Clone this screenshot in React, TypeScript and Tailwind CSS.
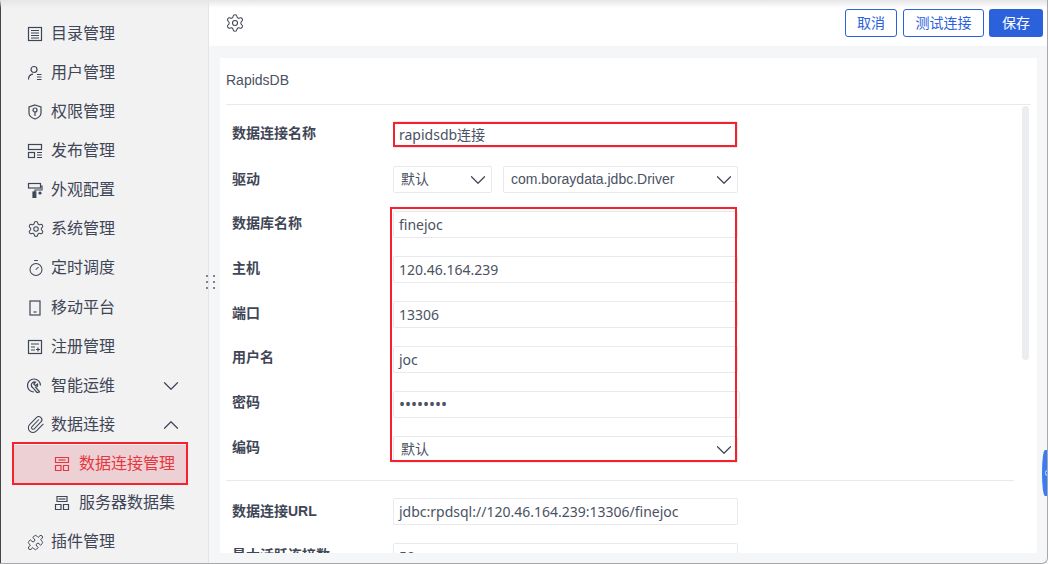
import type { ReactNode } from "react";
import { ChevronDown, ChevronUp, Paperclip, Puzzle, Settings, Timer } from "lucide-react";

function Ic({ children }: { children: ReactNode }) {
  return (
    <svg width="16" height="16" viewBox="0 0 16 16" fill="none" stroke="currentColor" strokeWidth="1.2">
      {children}
    </svg>
  );
}

const CatalogIcon = () => (
  <Ic>
    <rect x="1.500" y="1.500" width="13" height="13" />
    <path d="M4 4.500h8M4 7h8M4 9.500h8M4 12h8" />
  </Ic>
);
const UserIcon = () => (
  <Ic>
    <circle cx="7" cy="4.500" r="3" />
    <path d="M1.500 14.500c0-3 2-5 4.500-5.300M10 9.500h4.500M10 12h4.500M10 14.500h4.500" />
  </Ic>
);
const ShieldIcon = () => (
  <Ic>
    <path d="M8 1l6 2v6c0 3-3 5-6 6-3-1-6-3-6-6V3z" />
    <circle cx="8" cy="6" r="2" />
    <path d="M8 8v4" />
  </Ic>
);
const PublishIcon = () => (
  <Ic>
    <rect x="1.500" y="1.500" width="13" height="5" />
    <rect x="1.500" y="9.500" width="6" height="5" />
    <path d="M10 9.500h5M10 12h5M10 14.500h5" />
  </Ic>
);
const RollerIcon = () => (
  <Ic>
    <rect x="1.500" y="1.500" width="12" height="4.500" />
    <path d="M13.500 4h1.500v4h-7v2" />
    <rect x="6" y="10" width="2.800" height="5.500" fill="currentColor" />
    <circle cx="13" cy="11" r="1.600" fill="currentColor" stroke="none" />
  </Ic>
);
const PhoneIcon = () => (
  <Ic>
    <rect x="3" y="1" width="10" height="14" />
    <path d="M6.500 12h3" />
  </Ic>
);
const RegisterIcon = () => (
  <Ic>
    <rect x="1.500" y="1.500" width="13" height="13" />
    <path d="M4 5h8M4 8h4M4 11h4M11 8.500v4M9 10.500h4" />
  </Ic>
);
const OpsIcon = () => (
  <Ic>
    <path d="M13.500 7.500A6.500 6.500 0 1 0 7 14" />
    <path d="M4.500 6a3.200 3.200 0 0 1 4-2L6.800 6l1.700 1.700L10.500 6c.5 1.500-.3 3-1.800 3.400l4 4.600" />
    <path d="M4.500 6c-.5 1.800.3 3.500 1.800 4.200L10 14.500l2.700-.5" />
  </Ic>
);
const ServerIcon = ({ alt }: { alt?: boolean }) => (
  <Ic>
    <path d={alt ? "M3 1.500h10v5H3z" : "M1.500 1.500h13v5h-13z"} />
    <path d="M1.500 9.500h5.500v5H1.500zM9.500 9.500h5v5h-5z" />
    <path d="M4.500 4h7" />
  </Ic>
);

const items = [
  { label: "目录管理", icon: <CatalogIcon /> },
  { label: "用户管理", icon: <UserIcon /> },
  { label: "权限管理", icon: <ShieldIcon /> },
  { label: "发布管理", icon: <PublishIcon /> },
  { label: "外观配置", icon: <RollerIcon /> },
  { label: "系统管理", icon: <Settings size={18} strokeWidth={1.4} /> },
  { label: "定时调度", icon: <Timer size={18} strokeWidth={1.4} /> },
  { label: "移动平台", icon: <PhoneIcon /> },
  { label: "注册管理", icon: <RegisterIcon /> },
];

function Row({ label, children, pad = "pb-[2px]" }: { label: string; children: ReactNode; pad?: string }) {
  return (
    <div className="flex h-[27px] mb-[18px] items-center">
      <div className={`w-[167px] pl-[6px] ${pad} text-[14px] font-bold text-[#3f4656] whitespace-nowrap`}>{label}</div>
      {children}
    </div>
  );
}

function Input({ value, password }: { value: string; password?: boolean }) {
  return (
    <div className={`${password ? "w-[347px] text-[16px]" : "w-[345px] text-[14px]"} h-[27px] border border-[#e8e9ed] rounded-[2px] pl-[5px] leading-[25px] text-[#4a5263] whitespace-nowrap font-['Noto_Sans','Noto_Sans_CJK_SC',sans-serif]`}>
      {value}
    </div>
  );
}

function Select({ value, width }: { value: string; width: string }) {
  return (
    <div className={`${width} h-[27px] border border-[#e8e9ed] rounded-[2px] pl-[7px] flex items-center justify-between text-[14px] text-[#4a5263]`}>
      <span>{value}</span>
      <ChevronDown size={26} strokeWidth={1.1} className="text-[#3f4656]" />
    </div>
  );
}

export default function App() {
  return (
    <div className="relative flex w-[1048px] h-[564px] overflow-hidden bg-[#f5f6f8] font-['Liberation_Sans','Noto_Sans_CJK_SC',sans-serif]">
      {/* sidebar */}
      <aside className="w-[209px] h-full shrink-0 bg-[#f2f2f3] border-l border-l-[#444] border-r border-r-[#e4e5e9] pt-[14px] text-[16px] text-[#3f4656]">
        {items.map((it) => (
          <div key={it.label} className="h-[39.15px] flex items-center pl-[26px]">
            <span className="w-[24px] flex">{it.icon}</span>
            {it.label}
          </div>
        ))}
        <div className="h-[39.15px] flex items-center pl-[26px] pr-[24px]">
          <span className="w-[24px] flex"><OpsIcon /></span>
          <span className="flex-1">智能运维</span>
          <ChevronDown size={26} strokeWidth={1.1} />
        </div>
        <div className="h-[39.15px] flex items-center pl-[26px] pr-[24px]">
          <span className="w-[24px] flex"><Paperclip size={19} strokeWidth={1.35} className="-ml-[1px]" /></span>
          <span className="flex-1">数据连接</span>
          <ChevronUp size={26} strokeWidth={1.1} />
        </div>
        <div className="h-[39.15px] w-[176px] flex items-center ml-[11px] pl-[42px] bg-[#edd0d3] text-[#e63640]">
          <span className="w-[25px] flex"><ServerIcon /></span>
          数据连接管理
        </div>
        <div className="h-[39.15px] flex items-center pl-[53px]">
          <span className="w-[25px] flex"><ServerIcon alt /></span>
          服务器数据集
        </div>
        <div className="h-[39.15px] flex items-center pl-[26px]">
          <span className="w-[24px] flex"><Puzzle size={17} strokeWidth={1.4} /></span>
          插件管理
        </div>
      </aside>

      {/* main */}
      <main className="flex-1 flex flex-col min-w-0">
        <header className="h-[46px] shrink-0 bg-white flex items-center justify-between pl-[16px] pr-[5px]">
          <Settings size={20} strokeWidth={1.3} className="text-[#3f4656]" />
          <div className="flex text-[14px]">
            <button className="w-[52px] h-[28px] mr-[6px] rounded-[3px] border border-[#2b62dc] text-[#2b62dc]">取消</button>
            <button className="w-[81px] h-[28px] mr-[5px] rounded-[3px] border border-[#2b62dc] text-[#2b62dc]">测试连接</button>
            <button className="w-[54px] h-[28px] rounded-[3px] bg-[#2b62dc] text-white">保存</button>
          </div>
        </header>
        <section className="ml-[11px] mr-[11px] mt-[12px] h-[495px] bg-white px-[6px] overflow-hidden relative">
          <div className="h-[47px] border-b border-[#e8e9ed] text-[14px] leading-[44px] text-[#4a5263]">RapidsDB</div>
          <div className="w-[788px] pt-[16px]">
            <Row label="数据连接名称"><Input value="rapidsdb连接" /></Row>
            <Row label="驱动" pad="pb-0">
              <div className="flex gap-[11px]">
                <Select value="默认" width="w-[99px]" />
                <Select value="com.boraydata.jdbc.Driver" width="w-[235px]" />
              </div>
            </Row>
            <Row label="数据库名称"><Input value="finejoc" /></Row>
            <Row label="主机"><Input value="120.46.164.239" /></Row>
            <Row label="端口"><Input value="13306" /></Row>
            <Row label="用户名" pad="pb-[4px]"><Input value="joc" /></Row>
            <Row label="密码" pad="pb-[4px]"><Input value="••••••••" password /></Row>
            <div className="flex h-[27px] items-center">
              <div className="w-[167px] pl-[6px] pb-[4px] text-[14px] font-bold text-[#3f4656]">编码</div>
              <Select value="默认" width="w-[345px]" />
            </div>
            <div className="border-b border-[#e8e9ed] mt-[17px] mb-[17px]" />
            <Row label="数据连接URL" pad="pb-0"><Input value="jdbc:rpdsql://120.46.164.239:13306/finejoc" /></Row>
            <Row label="最大活跃连接数"><Input value="50" /></Row>
          </div>
          {/* scrollbar */}
          <div className="absolute left-[802px] top-[48px] w-[7px] h-[254px] rounded-full bg-[#ecedf1]" />
        </section>
      </main>

      {/* resize handle */}
      <div className="absolute left-[206px] top-[275px] grid grid-cols-2 gap-x-[5px] gap-y-[4px]">
        {[0, 1, 2, 3, 4, 5].map((i) => (
          <span key={i} className="w-[2px] h-[2px] bg-[#7d8290]" />
        ))}
      </div>

      {/* annotation boxes */}
      <div className="absolute left-[393px] top-[122px] w-[344px] h-[25px] border-2 border-[#f5222d]" />
      <div className="absolute left-[390px] top-[207px] w-[347px] h-[255px] border-2 border-[#f5222d]" />
      <div className="absolute left-[12px] top-[442px] w-[176px] h-[43px] border-2 border-[#f5222d]" />

      {/* window chrome */}
      <div className="absolute left-0 top-0 w-full h-[8px] bg-gradient-to-b from-[#e6e6e8] to-transparent" />
      <div className="absolute right-0 top-[450px] w-[6px] h-[46px] bg-[#3d7cf0] rounded-l-[100%]">
        <span className="absolute left-[3px] top-[20px] w-[5px] h-[6px] rounded-full border border-[#cfe0fb]" />
      </div>
      <div className="absolute inset-0 border-r border-b border-[#a9a9ab] rounded-br-[6px] pointer-events-none" />
    </div>
  );
}
